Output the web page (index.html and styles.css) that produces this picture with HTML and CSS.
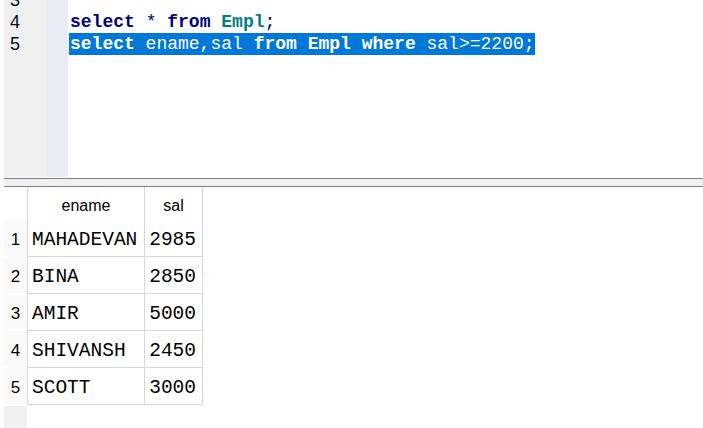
FILE: index.html
```html
<!DOCTYPE html>
<html>
<head>
<meta charset="utf-8">
<link rel="stylesheet" href="styles.css">
</head>
<body>
<div class="editor">
  <div class="gutter">
    <div class="lines">
      <div class="num">3</div>
      <div class="num">4</div>
      <div class="num">5</div>
    </div>
  </div>
  <div class="fold"></div>
  <div class="code">
    <div class="lines">
      <div class="line"></div>
      <div class="line"><span class="kw">select</span> <span class="op">*</span> <span class="kw">from</span> <span class="tbl">Empl</span><span class="op">;</span></div>
      <div class="line"><span class="sel"><b>select</b> ename,sal <b>from</b> <b>Empl</b> <b>where</b> sal&gt;=2200;</span></div>
    </div>
  </div>
</div>
<div class="splitter"></div>
<div class="results">
  <div class="grid">
    <div class="hcell rn"></div>
    <div class="hcell col">ename</div>
    <div class="hcell col last">sal</div>

    <div class="cell rn">1</div>
    <div class="cell col txt">MAHADEVAN</div>
    <div class="cell col last num-r">2985</div>

    <div class="cell rn">2</div>
    <div class="cell col txt">BINA</div>
    <div class="cell col last num-r">2850</div>

    <div class="cell rn">3</div>
    <div class="cell col txt">AMIR</div>
    <div class="cell col last num-r">5000</div>

    <div class="cell rn">4</div>
    <div class="cell col txt">SHIVANSH</div>
    <div class="cell col last num-r">2450</div>

    <div class="cell rn">5</div>
    <div class="cell col txt">SCOTT</div>
    <div class="cell col last num-r">3000</div>
  </div>
  <div class="filler"></div>
</div>
</body>
</html>
```

FILE: styles.css
```css
* { box-sizing: border-box; }
html, body {
  margin: 0;
  padding: 0;
  width: 703px;
  height: 428px;
  overflow: hidden;
  background: #ffffff;
}

.editor {
  display: flex;
  height: 177px;
  padding-left: 4px;
  overflow: hidden;
}
.gutter {
  width: 43px;
  background: #f0f0f0;
  overflow: hidden;
}
.fold {
  width: 21px;
  background: #ebebf5;
}
.code {
  flex: 1;
  padding-left: 1px;
  overflow: hidden;
}
.lines {
  margin-top: -11px;
}
.num {
  height: 22px;
  line-height: 22px;
  padding-left: 6px;
  font-family: "Liberation Sans", Arial, sans-serif;
  font-size: 18px;
  color: #0a0a1e;
}
.line {
  height: 22px;
  line-height: 22px;
  font-family: "Liberation Mono", "Courier New", monospace;
  font-size: 18px;
  white-space: pre;
  color: #000080;
  padding-left: 1px;
}
.kw { font-weight: bold; color: #000080; }
.tbl { font-weight: bold; color: #008080; }
.op { color: #000080; }
.sel {
  display: inline-block;
  height: 22px;
  margin-left: -1px;
  padding-left: 1px;
  padding-right: 0;
  background: #0078d7;
  color: #ffffff;
}
.sel b { font-weight: bold; }

.splitter {
  margin-top: 1px;
  margin-left: 4px;
  height: 9px;
  background: #f0f0f0;
  border-top: 1px solid #7c7c7c;
  border-bottom: 1px solid #7e7e8e;
}

.results {
  padding-left: 4px;
}
.grid {
  display: grid;
  grid-template-columns: 23px 117px 59px;
  grid-template-rows: 33px repeat(5, 37px);
}
.hcell {
  font-family: "Liberation Sans", Arial, sans-serif;
  font-size: 16px;
  color: #000;
  text-align: center;
  padding-top: 4px;
  line-height: 29px;
}
.col {
  border-left: 1px solid #d8d8d8;
}
.col.last {
  border-right: 1px solid #d8d8d8;
}
.cell {
  padding-top: 4px;
  line-height: 32px;
  border-bottom: 1px solid #d8d8d8;
}
.cell.rn {
  font-family: "Liberation Sans", Arial, sans-serif;
  font-size: 17px;
  color: #000;
  text-align: center;
  background: #fafafa;
  border-bottom: 1px solid #ffffff;
}
.txt, .num-r {
  font-family: "Liberation Mono", "Courier New", monospace;
  font-size: 19.5px;
  color: #000;
}
.txt {
  padding-left: 4px;
}
.num-r {
  text-align: right;
  padding-right: 6px;
}
.filler {
  width: 23px;
  height: 40px;
  margin-top: 1px;
  background: #f0f0f0;
}
```
